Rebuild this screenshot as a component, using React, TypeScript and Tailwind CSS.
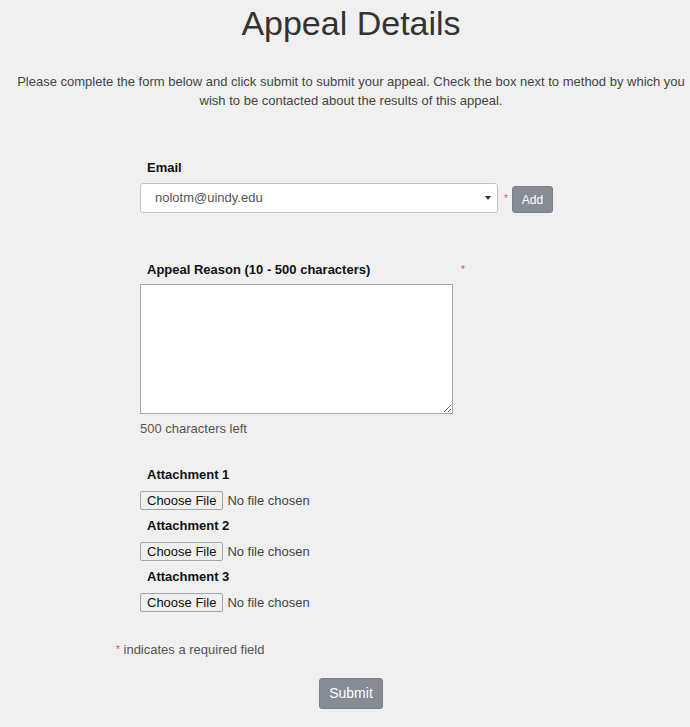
import React from "react";

const font = { fontFamily: '"Liberation Sans", Arial, sans-serif' };

function FileRow({ label }: { label: string }) {
  return (
    <div>
      <div className="pl-[7px] text-[13px] leading-[19px] font-bold text-[#111]">{label}</div>
      <div className="mt-[7px] flex items-center">
        <button className="h-[19px] px-[6px] border border-[#a6a6a6] rounded-[2px] bg-[#efefef] text-[13px] leading-[17px] text-[#111]">
          Choose File
        </button>
        <span className="ml-[4px] text-[13px] leading-[19px] text-[#444]">No file chosen</span>
      </div>
    </div>
  );
}

export default function App() {
  return (
    <div className="w-full min-h-[727px] bg-[#f0f0f0] overflow-hidden" style={font}>
      <div className="w-[702px]">
        <h1 className="mt-[3px] text-center text-[34px] leading-[40px] text-[#333]">Appeal Details</h1>
        <p className="mt-[29px] px-[10px] text-center text-[13px] leading-[19px] text-[#444]">
          Please complete the form below and click submit to submit your appeal. Check the box next to method by which you wish to be contacted about the results of this appeal.
        </p>

        <div className="ml-[140px]">
          <div className="mt-[48px] pl-[7px] text-[13px] leading-[19px] font-bold text-[#111]">Email</div>
          <div className="mt-[6px] flex items-end">
            <div className="w-[358px] h-[30px] flex items-center justify-between bg-white border border-[#c4c4c4] rounded-[3px] pl-[14px] pr-[5px]">
              <span className="text-[13px] text-[#555]">nolotm@uindy.edu</span>
              <svg width="8" height="6" viewBox="0 0 8 6">
                <path d="M1 1h6L4 5z" fill="#333" />
              </svg>
            </div>
            <span className="ml-[6px] mb-[9px] text-[10px] leading-[10px] text-[#d9534f]">*</span>
            <button className="ml-[4px] w-[41px] h-[27px] rounded-[3px] bg-[#868b94] border border-[#7b8089] text-white text-[12px]">
              Add
            </button>
          </div>

          <div className="mt-[47px] w-[325px] flex justify-between pl-[7px]">
            <span className="text-[13px] leading-[19px] font-bold text-[#111]">Appeal Reason (10 - 500 characters)</span>
            <span className="text-[10px] leading-[19px] text-[#d9534f]">*</span>
          </div>
          <textarea className="mt-[5px] block w-[313px] h-[130px] bg-white border border-[#a9a9a9]" />
          <div className="mt-[5px] text-[13px] leading-[19px] text-[#555]">500 characters left</div>

          <div className="mt-[27px] flex flex-col gap-[6px]">
            <FileRow label="Attachment 1" />
            <FileRow label="Attachment 2" />
            <FileRow label="Attachment 3" />
          </div>
        </div>

        <div className="mt-[28px] pl-[116px] text-[13px] leading-[19px] text-[#555]">
          <span className="text-[#d9534f] text-[10px] align-top">*</span> indicates a required field
        </div>

        <div className="mt-[19px] flex justify-center">
          <button className="w-[64px] h-[31px] rounded-[3px] bg-[#868b94] border border-[#7b8089] text-white text-[14px]">
            Submit
          </button>
        </div>
      </div>
    </div>
  );
}
